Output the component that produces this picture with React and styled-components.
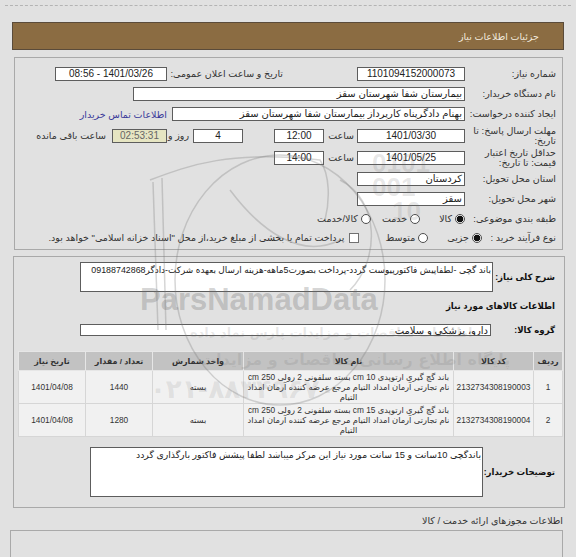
import React from 'react'
import styled, {createGlobalStyle} from 'styled-components'

const GlobalStyle = createGlobalStyle`
  html, body {
    margin: 0;
    padding: 0;
    background: #e1e1e1;
  }
  body {
    font-family: "Liberation Sans", "DejaVu Sans", sans-serif;
    font-size: 9.5px;
    color: #222;
  }
`

const Page = styled.div`
  position: relative;
  width: 576px;
  height: 557px;
  overflow: hidden;
  direction: rtl;
  background: #e1e1e1;
`

const DashedLine = styled.div`
  margin: 5px 5px 0;
  border-top: 1px dashed #b4b4b4;
`

const HeaderBar = styled.div`
  margin: 16px 12px 0 12px;
  height: 28px;
  box-sizing: border-box;
  background: #8b6c42;
  border: 1px solid #5a4b3a;
  color: #f1e9dc;
  display: flex;
  align-items: center;
  padding-right: 24px;
  font-size: 9.5px;
`

const Section = styled.div`
  margin: ${p => p.$top}px ${p => p.$right}px 0 ${p => p.$left}px;
  border: 1px solid #a9a9a9;
  padding: ${p => p.$pad};
  height: ${p => (p.$h ? `${p.$h}px` : 'auto')};
`

const Row = styled.div`
  display: flex;
  align-items: center;
  height: ${p => p.$h}px;
  padding-right: ${p => p.$pr || 0}px;
  white-space: nowrap;
`

const Label = styled.div`
  flex: none;
  width: ${p => (p.$w ? `${p.$w}px` : 'auto')};
  margin-left: ${p => p.$ml || 0}px;
  line-height: 10px;
  font-weight: ${p => (p.$bold ? 'bold' : 'normal')};
  font-size: ${p => (p.$bold ? 8.6 : 9.5)}px;
  color: ${p => (p.$bold ? '#111' : '#333')};
  white-space: nowrap;
`

const Field = styled.div`
  flex: none;
  box-sizing: border-box;
  width: ${p => p.$w}px;
  height: ${p => p.$h || 14}px;
  margin-left: ${p => p.$ml || 0}px;
  border: 1px solid #5d5d5d;
  background: ${p => p.$bg || '#fff'};
  color: ${p => p.$color || '#222'};
  text-align: ${p => p.$align || 'center'};
  line-height: 12px;
  font-size: 10px;
  padding: 0 2px;
  overflow: hidden;
  white-space: nowrap;
`

const TextArea = styled(Field)`
  white-space: normal;
  text-align: right;
  line-height: 14px;
  font-size: ${p => p.$fs || 9.3}px;
  letter-spacing: ${p => p.$ls || 0}px;
  padding: 0 1px;
`

const Link = styled.span`
  color: #3a3a9a;
`

const Radio = styled.span`
  flex: none;
  width: 10px;
  height: 10px;
  box-sizing: border-box;
  border-radius: 50%;
  border: 1px solid #4d4d4d;
  background: ${p =>
    p.$on ? 'radial-gradient(circle, #111 0 3.2px, #fff 3.6px)' : '#fff'};
  margin-left: 3px;
`

const Check = styled.span`
  flex: none;
  width: 10px;
  height: 10px;
  box-sizing: border-box;
  border: 1px solid #707070;
  background: #fff;
  margin-left: 5px;
`

const Opt = styled.span`
  margin-left: ${p => p.$ml || 0}px;
  color: #333;
`

const Table = styled.table`
  margin: 0 1px 0 0;
  width: 538px;
  border-collapse: collapse;
  table-layout: fixed;
  font-size: 8.3px;
`

const Th = styled.th`
  width: ${p => p.$w}px;
  height: 18px;
  padding: 0;
  background: #c2c2c2;
  border: 1px solid #e6e6e6;
  color: #333;
  font-weight: bold;
  font-size: 8px;
`

const Td = styled.td`
  height: 32px;
  padding: 0 2px;
  background: #f1f1f1;
  border: 1px solid #d6d6d6;
  text-align: center;
  line-height: 10px;
  color: #333;
`

const SubTitle = styled.div`
  margin: 7px 13px 0 0;
  color: #333;
`

const Watermark = styled.div`
  position: absolute;
  inset: 0;
  pointer-events: none;
  direction: ltr;
`

const WmText = styled.div`
  position: absolute;
  left: ${p => p.$x}px;
  top: ${p => p.$y}px;
  font-family: ${p => (p.$latin ? '"Liberation Sans", Arial, sans-serif' : '"DejaVu Sans", sans-serif')};
  font-weight: bold;
  font-size: ${p => p.$size}px;
  color: rgba(110, 110, 110, ${p => p.$a || 0.28});
  white-space: nowrap;
  line-height: 1;
`

const items = [
  {
    n: 1,
    code: '2132734308190003',
    line1: 'باند گچ گیری ارتوپدی cm 10 بسته سلفونی 2 رولی 250 cm',
    line2: 'نام تجارتی آرمان امداد التیام مرجع عرضه کننده آرمان امداد التیام',
    unit: 'بسته',
    qty: '1440',
    date: '1401/04/08',
  },
  {
    n: 2,
    code: '2132734308190004',
    line1: 'باند گچ گیری ارتوپدی cm 15 بسته سلفونی 2 رولی 250 cm',
    line2: 'نام تجارتی آرمان امداد التیام مرجع عرضه کننده آرمان امداد التیام',
    unit: 'بسته',
    qty: '1280',
    date: '1401/04/08',
  },
]

const App = () => (
  <Page>
    <GlobalStyle />
    <DashedLine />
    <HeaderBar>جزئیات اطلاعات نیاز</HeaderBar>

    <Section $top={7} $right={13} $left={14} $pad="6px 6px 2px 0">
      <Row $h={19}>
        <Label $w={89} $ml={2}>شماره نیاز:</Label>
        <Field $w={108} $ml={74}>1101094152000073</Field>
        <Label $w={112} $ml={4}>تاریخ و ساعت اعلان عمومی:</Label>
        <Field $w={112}>1401/03/26 - 08:56</Field>
      </Row>
      <Row $h={21}>
        <Label $w={89} $ml={2}>نام دستگاه خریدار:</Label>
        <Field $w={332} $align="right">بیمارستان شفا شهرستان سقز</Field>
      </Row>
      <Row $h={20}>
        <Label $w={89} $ml={2}>ایجاد کننده درخواست:</Label>
        <Field $w={293} $ml={5} $align="right">
          بهنام دادگرپناه کارپرداز بیمارستان شفا شهرستان سقز
        </Field>
        <Link>اطلاعات تماس خریدار</Link>
      </Row>
      <Row $h={23}>
        <Label $w={89} $ml={2}>
          مهلت ارسال پاسخ: تا
          <br />
          تاریخ:
        </Label>
        <Field $w={108} $ml={3}>1401/03/30</Field>
        <Label $w={25} $ml={5}>ساعت</Label>
        <Field $w={50} $ml={31}>12:00</Field>
        <Field $w={50} $ml={4}>4</Field>
        <Label $w={18} $ml={4}>روز و</Label>
        <Field $w={55} $ml={6} $bg="#e6e5c2" $color="#666">02:53:31</Field>
        <Label>ساعت باقی مانده</Label>
      </Row>
      <Row $h={22}>
        <Label $w={89} $ml={2}>
          حداقل تاریخ اعتبار
          <br />
          قیمت: تا تاریخ:
        </Label>
        <Field $w={108} $ml={3}>1401/05/25</Field>
        <Label $w={25} $ml={5}>ساعت</Label>
        <Field $w={50}>14:00</Field>
      </Row>
      <Row $h={20}>
        <Label $w={89} $ml={2}>استان محل تحویل:</Label>
        <Field $w={108} $align="right">کردستان</Field>
      </Row>
      <Row $h={20}>
        <Label $w={89} $ml={2}>شهر محل تحویل:</Label>
        <Field $w={108} $align="right">سقز</Field>
      </Row>
      <Row $h={19}>
        <Label $w={89} $ml={2}>طبقه بندی موضوعی:</Label>
        <Radio $on />
        <Opt $ml={19}>کالا</Opt>
        <Radio />
        <Opt $ml={11}>خدمت</Opt>
        <Radio />
        <Opt>کالا/خدمت</Opt>
      </Row>
      <Row $h={19}>
        <Label $w={70} $ml={4}>نوع فرآیند خرید :</Label>
        <Radio $on />
        <Opt $ml={19}>جزیی</Opt>
        <Radio />
        <Opt $ml={26}>متوسط</Opt>
        <Check />
        <Opt>
          پرداخت تمام یا بخشی از مبلغ خرید،از محل "اسناد خزانه اسلامی" خواهد بود.
        </Opt>
      </Row>
    </Section>

    <Section $top={6} $right={11} $left={13} $pad="4px 0 9px 0">
      <Row $h={32} $pr={9}>
        <Label $w={60} $ml={2} $bold>شرح کلی نیاز:</Label>
        <TextArea $w={413} $h={30} $fs={8.9} $ls={-0.05}>
          باند گچی -لطفاپیش فاکتورپیوست گردد-پرداخت بصورت5ماهه-هزینه ارسال بعهده شرکت-دادگر09188742868
        </TextArea>
      </Row>
      <Row $h={26} $pr={9}>
        <Label $bold>اطلاعات کالاهای مورد نیاز</Label>
      </Row>
      <Row $h={22} $pr={9}>
        <Label $w={62} $ml={2} $bold>گروه کالا:</Label>
        <Field $w={411} $h={12} $align="right">دارو، پزشکی و سلامت</Field>
      </Row>
      <Row $h={10} />
      <Table>
        <thead>
          <tr>
            <Th $w={28}>ردیف</Th>
            <Th $w={79}>کد کالا</Th>
            <Th $w={209}>نام کالا</Th>
            <Th $w={90}>واحد شمارش</Th>
            <Th $w={66}>تعداد / مقدار</Th>
            <Th $w={66}>تاریخ نیاز</Th>
          </tr>
        </thead>
        <tbody>
          {items.map(it => (
            <tr key={it.n}>
              <Td>{it.n}</Td>
              <Td>{it.code}</Td>
              <Td>
                {it.line1}
                <br />
                {it.line2}
              </Td>
              <Td>{it.unit}</Td>
              <Td>{it.qty}</Td>
              <Td>{it.date}</Td>
            </tr>
          ))}
        </tbody>
      </Table>
      <Row $h={9} />
      <Row $h={52} $pr={9}>
        <Label $w={70} $ml={2} $bold>توضیحات خریدار:</Label>
        <TextArea $w={393} $h={50}>
          باندگچی 10سانت و 15 سانت مورد نیاز این مرکز میباشد لطفا پیشش فاکتور بارگذاری گردد
        </TextArea>
      </Row>
    </Section>

    <SubTitle>اطلاعات مجوزهای ارائه خدمت / کالا</SubTitle>
    <Section $top={4} $right={13} $left={10} $pad="0" $h={60} />

    <Watermark>
      <svg width="576" height="557" style={{position: 'absolute', left: 0, top: 0}}>
        <g fill="none" stroke="rgba(120,120,120,0.3)" strokeWidth="1.5">
          <path d="M150 180 C190 165 230 150 320 160 C330 175 330 200 325 220" />
          <path d="M153 182 L158 330" />
          <path d="M162 178 L166 330" />
          <ellipse cx="280" cy="280" rx="105" ry="125" />
          <path d="M230 190 C260 230 300 260 340 240" />
          <path d="M340 180 C380 200 380 260 350 290" />
        </g>
      </svg>
      <WmText $latin $x={140} $y={284} $size={31} $a={0.3}>ParsNamadData</WmText>
      <WmText $latin $x={372} $y={150} $size={26} $a={0.16}>0101</WmText>
      <WmText $latin $x={372} $y={174} $size={26} $a={0.16}>001</WmText>
      <WmText $latin $x={392} $y={198} $size={26} $a={0.16}>10</WmText>
      <WmText $x={190} $y={326} $size={13} $a={0.16}>اطلاعات مناقصات و مزایدات پارس نماد داده</WmText>
      <WmText $x={200} $y={352} $size={16} $a={0.16}>پایگاه اطلاع رسانی مناقصات و مزایدات</WmText>
      <WmText $x={150} $y={376} $size={26} $a={0.14}>۰۲۱-۸۸۳۴۹۶۷۰</WmText>
    </Watermark>
  </Page>
)

export default App
